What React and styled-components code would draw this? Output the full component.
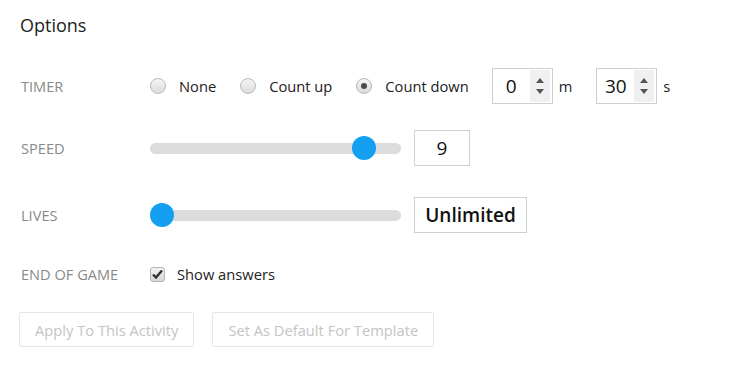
import React, { useState } from 'react';
import styled, { createGlobalStyle } from 'styled-components';

const GlobalStyle = createGlobalStyle`
    body {
        margin: 0;
        background: #fff;
        font-family: 'Open Sans', 'Noto Sans', sans-serif;
    }
`;

const Container = styled.div`
    padding: 10px 20px 0 20px;
    width: 734px;
    box-sizing: border-box;
`;

const Title = styled.h2`
    margin: 0;
    font-size: 18px;
    font-weight: 400;
    line-height: 30px;
    color: #222;
`;

const Row = styled.div`
    display: grid;
    grid-template-columns: 130px 1fr;
    align-items: center;
    height: 36px;
    margin-top: ${props => props.$gap}px;
`;

const Label = styled.div`
    font-size: 14.6px;
    color: #8a8a8a;
    text-transform: uppercase;
    padding-left: 1px;
`;

const Controls = styled.div`
    display: flex;
    align-items: center;
`;

const RadioOption = styled.label`
    display: flex;
    align-items: center;
    font-size: 14.7px;
    color: #222;
    margin-right: ${props => props.$space}px;
`;

const RadioCircle = styled.span`
    width: 16px;
    height: 16px;
    border-radius: 50%;
    border: 1px solid #b9b9b9;
    box-sizing: border-box;
    background: linear-gradient(#f4f4f4, #dcdcdc);
    margin-right: 13px;
    display: flex;
    align-items: center;
    justify-content: center;

    &::after {
        content: '';
        width: 6px;
        height: 6px;
        border-radius: 50%;
        background: ${props => (props.$checked ? '#4a4a4a' : 'transparent')};
    }
`;

const NumberBox = styled.div`
    display: flex;
    align-items: stretch;
    width: 61px;
    height: 36px;
    border: 1px solid #cfcfcf;
    box-sizing: border-box;
    background: #fff;
`;

const NumberValue = styled.div`
    flex: 1;
    display: flex;
    align-items: center;
    justify-content: center;
    font-size: 19px;
    color: #111;
`;

const Spinner = styled.div`
    width: 20px;
    margin: 1px 2px 1px 0;
    background: #f0f0f0;
    display: flex;
    flex-direction: column;
    align-items: center;
    justify-content: center;
    gap: 6px;
`;

const Unit = styled.span`
    font-size: 14.7px;
    color: #222;
    margin: 0 24px 0 6px;
`;

const Track = styled.div`
    position: relative;
    width: 251px;
    height: 11px;
    border-radius: 6px;
    background: #dcdcdc;
    margin-right: 13px;
`;

const Thumb = styled.div`
    position: absolute;
    top: 50%;
    width: 24px;
    height: 24px;
    margin-top: -12px;
    margin-left: -12px;
    border-radius: 50%;
    background: #149ff0;
`;

const ValueBox = styled.div`
    width: ${props => props.$width}px;
    height: 36px;
    border: 1px solid #cfcfcf;
    box-sizing: border-box;
    display: flex;
    align-items: center;
    justify-content: center;
    font-size: 19px;
    font-weight: ${props => (props.$bold ? 600 : 400)};
    color: #111;
`;

const CheckBox = styled.span`
    width: 15px;
    height: 15px;
    border: 1px solid #b5b5b5;
    border-radius: 3px;
    box-sizing: border-box;
    background: linear-gradient(#f2f2f2, #d8d8d8);
    display: flex;
    align-items: center;
    justify-content: center;
    margin-right: 12px;
`;

const CheckLabel = styled.span`
    font-size: 14.7px;
    color: #222;
`;

const ButtonRow = styled.div`
    display: flex;
    gap: 18px;
    margin-top: 20px;
    margin-left: -1px;
`;

const Button = styled.button`
    height: 35px;
    padding: 0 15px;
    border: 1px solid #e6e6e6;
    border-radius: 2px;
    background: #fff;
    color: #c4c4c4;
    font-family: 'Open Sans', sans-serif;
    font-size: 14.7px;
`;

const Arrow = ({ up }) => (
    <svg width="8" height="5" viewBox="0 0 8 5">
        <path d={up ? 'M4 0 L8 5 L0 5 Z' : 'M0 0 L8 0 L4 5 Z'} fill="#555" />
    </svg>
);

const NumberInput = ({ value }) => (
    <NumberBox>
        <NumberValue>{value}</NumberValue>
        <Spinner>
            <Arrow up />
            <Arrow />
        </Spinner>
    </NumberBox>
);

const Slider = ({ value, min, max }) => {
    const ratio = (value - min) / (max - min);
    return (
        <Track>
            <Thumb style={{ left: `calc(12px + (100% - 24px) * ${ratio})` }} />
        </Track>
    );
};

const App = () => {
    const [timer] = useState('down');
    const options = [
        { id: 'none', text: 'None', space: 24 },
        { id: 'up', text: 'Count up', space: 24 },
        { id: 'down', text: 'Count down', space: 23 }
    ];

    return (
        <Container>
            <GlobalStyle />
            <Title>Options</Title>

            <Row $gap={28}>
                <Label>Timer</Label>
                <Controls>
                    {options.map(opt => (
                        <RadioOption key={opt.id} $space={opt.space}>
                            <RadioCircle $checked={timer === opt.id} />
                            {opt.text}
                        </RadioOption>
                    ))}
                    <NumberInput value="0" />
                    <Unit>m</Unit>
                    <NumberInput value="30" />
                    <Unit>s</Unit>
                </Controls>
            </Row>

            <Row $gap={26}>
                <Label>Speed</Label>
                <Controls>
                    <Slider value={9} min={1} max={10} />
                    <ValueBox $width={56}>9</ValueBox>
                </Controls>
            </Row>

            <Row $gap={31}>
                <Label>Lives</Label>
                <Controls>
                    <Slider value={0} min={0} max={10} />
                    <ValueBox $width={113} $bold>Unlimited</ValueBox>
                </Controls>
            </Row>

            <Row $gap={23}>
                <Label>End of game</Label>
                <Controls>
                    <CheckBox>
                        <svg width="11" height="10" viewBox="0 0 11 10">
                            <path d="M1 5.5 L4 8.5 L10 1.5" stroke="#333" strokeWidth="2.4" fill="none" />
                        </svg>
                    </CheckBox>
                    <CheckLabel>Show answers</CheckLabel>
                </Controls>
            </Row>

            <ButtonRow>
                <Button>Apply To This Activity</Button>
                <Button>Set As Default For Template</Button>
            </ButtonRow>
        </Container>
    );
};

export default App;
